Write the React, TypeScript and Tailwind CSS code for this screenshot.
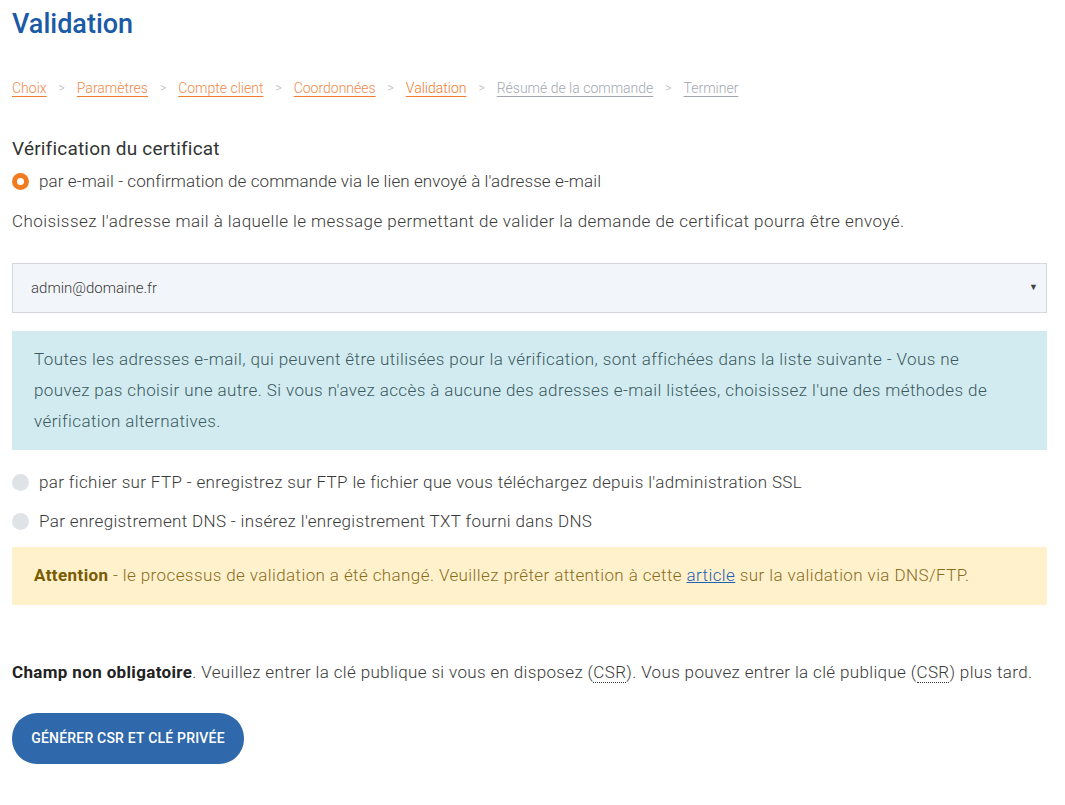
import React from "react";

const font = { fontFamily: 'Roboto, "Noto Sans", sans-serif' };

function Crumb({ label, kind }: { label: string; kind: "done" | "active" | "todo" }) {
  const cls =
    kind === "done"
      ? "text-[#f08a4b] underline decoration-[#f07c2c]"
      : kind === "active"
      ? "text-[#f07c2c] underline decoration-[#f07c2c]"
      : "text-[#a3a8b0] underline decoration-[#a3a8b0]";
  return <a className={`${cls} underline-offset-[3px]`}>{label}</a>;
}

function Radio({ checked }: { checked?: boolean }) {
  return checked ? (
    <span className="inline-block w-[17px] h-[17px] rounded-full border-[5px] border-[#f07c1f] bg-white shrink-0" />
  ) : (
    <span className="inline-block w-[17px] h-[17px] rounded-full bg-[#dfe2e7] shrink-0" />
  );
}

export default function App() {
  const crumbs: { label: string; kind: "done" | "active" | "todo" }[] = [
    { label: "Choix", kind: "done" },
    { label: "Paramètres", kind: "done" },
    { label: "Compte client", kind: "done" },
    { label: "Coordonnées", kind: "done" },
    { label: "Validation", kind: "active" },
    { label: "Résumé de la commande", kind: "todo" },
    { label: "Terminer", kind: "todo" },
  ];
  return (
    <div className="bg-white min-h-[805px] w-[1065px] pl-3 text-[#3a3a3a]" style={font}>
      <div className="w-[1035px]">
        <h1 className="text-[27px] leading-[34px] pt-[7px] font-medium text-[#1b5aa6]">Validation</h1>
        <nav className="mt-[38px] flex items-center text-[14px] leading-[18px] font-light">
          {crumbs.map((c, i) => (
            <React.Fragment key={c.label}>
              {i > 0 && <span className="text-[#b8bcc2] mx-[12px] text-[12px]">&gt;</span>}
              <Crumb label={c.label} kind={c.kind} />
            </React.Fragment>
          ))}
        </nav>
        <h2 className="mt-[40px] text-[19px] leading-[24px] text-[#333] tracking-[0.2px]">Vérification du certificat</h2>
        <label className="mt-[9px] flex items-center gap-[10px] text-[17px] leading-[22px] font-light tracking-[0.1px]">
          <Radio checked />
          <span>par e-mail - confirmation de commande via le lien envoyé à l'adresse e-mail</span>
        </label>
        <p className="mt-[18px] text-[17px] leading-[22px] font-light tracking-[0.45px]">
          Choisissez l'adresse mail à laquelle le message permettant de valider la demande de certificat pourra être envoyé.
        </p>
        <div className="mt-[31px] h-[50px] border border-[#d3d7dc] bg-[#f2f5f9] flex items-center justify-between pl-[18px] pr-[8px] text-[15px] font-light">
          <span>admin@domaine.fr</span>
          <span className="text-[9px] text-[#444]">▼</span>
        </div>
        <div className="mt-[18px] bg-[#d1ebf0] px-[22px] py-[13px] text-[17px] leading-[31px] text-[#3c5a5e] font-light tracking-[0.4px]">
          Toutes les adresses e-mail, qui peuvent être utilisées pour la vérification, sont affichées dans la liste suivante - Vous ne
          <br />
          pouvez pas choisir une autre. Si vous n'avez accès à aucune des adresses e-mail listées, choisissez l'une des méthodes de
          <br />
          vérification alternatives.
        </div>
        <label className="mt-[21px] flex items-center gap-[10px] text-[17px] leading-[22px] font-light tracking-[0.35px]">
          <Radio />
          <span>par fichier sur FTP - enregistrez sur FTP le fichier que vous téléchargez depuis l'administration SSL</span>
        </label>
        <label className="mt-[17px] flex items-center gap-[10px] text-[17px] leading-[22px] font-light tracking-[0.35px]">
          <Radio />
          <span>Par enregistrement DNS - insérez l'enregistrement TXT fourni dans DNS</span>
        </label>
        <div className="mt-[15px] bg-[#fff1cc] h-[58px] flex items-center px-[22px] text-[17px] text-[#8a6d1c] font-light tracking-[0.4px]">
          <span>
            <b className="font-bold text-[#7a5a00]">Attention</b> - le processus de validation a été changé. Veuillez prêter attention à cette{" "}
            <span className="text-[#1f5fb4] underline decoration-[#1f5fb4]">article</span> sur la validation via DNS/FTP.
          </span>
        </div>
        <p className="mt-[56px] text-[17px] leading-[22px] font-light tracking-[0.35px]">
          <b className="font-bold text-[#222]">Champ non obligatoire</b>. Veuillez entrer la clé publique si vous en disposez (
          <abbr className="no-underline border-b border-dotted border-[#333]">CSR</abbr>). Vous pouvez entrer la clé publique (
          <abbr className="no-underline border-b border-dotted border-[#333]">CSR</abbr>) plus tard.
        </p>
        <button className="mt-[30px] h-[51px] w-[232px] rounded-[25px] bg-[#2f69ab] text-white text-[14px] font-medium tracking-[0.2px]">
          GÉNÉRER CSR ET CLÉ PRIVÉE
        </button>
      </div>
    </div>
  );
}
